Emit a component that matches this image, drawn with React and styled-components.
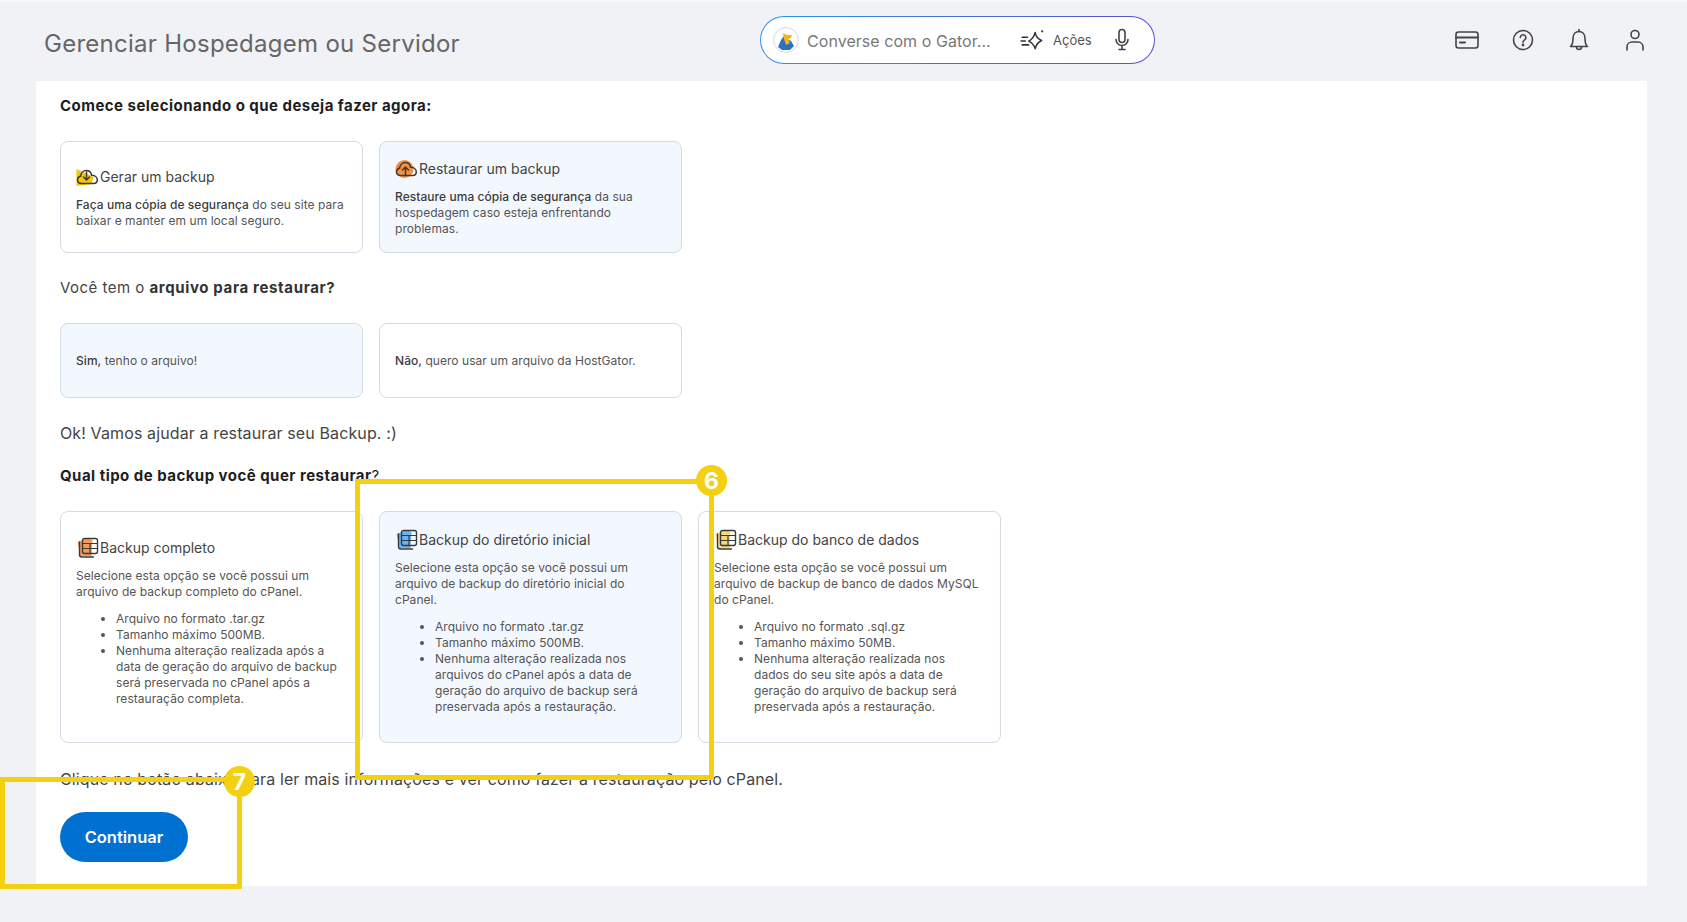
import styled, { createGlobalStyle } from "styled-components";

const GlobalStyle = createGlobalStyle`
  html, body {
    margin: 0;
    padding: 0;
    background: #f1f2f6;
  }
  * {
    box-sizing: border-box;
  }
`;

const Page = styled.div`
  position: relative;
  width: 1687px;
  height: 922px;
  overflow: hidden;
  background: #f1f2f6;
  border-top: 2px solid #f8f8f8;
  font-family: "Inter", "Liberation Sans", sans-serif;
  color: #444;
`;

const Header = styled.header`
  height: 79px;
  display: flex;
  align-items: center;
  padding: 3px 40px 0 44px;
`;

const Title = styled.h1`
  margin: 0;
  width: 716px;
  font-size: 24px;
  font-weight: 400;
  letter-spacing: 0.27px;
  color: #666;
  white-space: nowrap;
`;

const ChatBox = styled.div`
  width: 395px;
  height: 48px;
  margin-top: -7px;
  border-radius: 24px;
  padding: 1px;
  background: linear-gradient(90deg, #2c93ea, #5a4fcf);
`;

const ChatInner = styled.div`
  height: 100%;
  display: flex;
  align-items: center;
  border-radius: 23px;
  background: #fff;
  padding-left: 12px;
`;

const ChatPlaceholder = styled.span`
  margin-left: 8px;
  width: 213px;
  padding-top: 2px;
  font-size: 16px;
  letter-spacing: 0.05px;
  color: #777;
  white-space: nowrap;
`;

const Actions = styled.span`
  display: flex;
  align-items: center;
  gap: 7px;
  width: 90px;
  font-size: 13px;
  color: #555;
`;

const HeaderIcons = styled.div`
  margin-left: auto;
  display: flex;
  gap: 32px;
  margin-top: -7px;
`;

const Panel = styled.main`
  margin: 0 40px 0 36px;
  height: 805px;
  background: #fff;
  padding: 15px 24px 0;
`;

const Question = styled.p`
  margin: ${(p) => p.$margin || 0};
  height: 20px;
  line-height: 20px;
  font-size: 15px;
  letter-spacing: 0.47px;
  color: ${(p) => (p.$plain ? "#444" : "#1e1e1e")};
  font-weight: ${(p) => (p.$strong ? 700 : 400)};
  b {
    font-weight: 700;
    letter-spacing: 0.65px;
    color: #333;
  }
  span {
    font-weight: 400;
  }
`;

const CardRow = styled.div`
  display: flex;
  gap: 16px;
  margin: 25px 0;
`;

const Card = styled.div`
  width: 303px;
  height: ${(p) => p.$height}px;
  display: flex;
  flex-direction: column;
  justify-content: center;
  padding: 0 15px;
  border: 1px solid #d3dbe4;
  border-radius: 8px;
  background: ${(p) => (p.$active ? "#f3f8ff" : "#fff")};
  font-size: 12px;
  line-height: 16px;
  color: #555;
  b {
    font-weight: 500;
    color: #3c3c3c;
  }
`;

const CardTitle = styled.div`
  display: flex;
  align-items: center;
  height: 22px;
  margin-bottom: 9px;
  gap: 1px;
  font-size: 14px;
  color: #444;
`;

const CardText = styled.p`
  margin: 0;
  letter-spacing: 0.05px;
`;

const InfoList = styled.ul`
  margin: 11px 0 11px;
  padding: 0 6px 0 40px;
  letter-spacing: 0.05px;
`;

const PlainLine = styled.p`
  margin: ${(p) => p.$margin || 0};
  height: 20px;
  line-height: 20px;
  font-size: 16px;
  letter-spacing: 0.12px;
  color: #444;
`;

const ContinueButton = styled.button`
  display: block;
  width: 128px;
  height: 50px;
  margin-top: 23px;
  border: none;
  border-radius: 25px;
  background: #0071d1;
  color: #fff;
  font-family: inherit;
  font-size: 16.5px;
  font-weight: 600;
`;

const Highlight = styled.div`
  position: absolute;
  left: ${(p) => p.$x}px;
  top: ${(p) => p.$y}px;
  width: ${(p) => p.$w}px;
  height: ${(p) => p.$h}px;
  border: 5px solid #f3d110;
`;

const Badge = styled.span`
  position: absolute;
  right: -18px;
  top: ${(p) => p.$top}px;
  width: 31px;
  height: 31px;
  display: flex;
  align-items: center;
  justify-content: center;
  border-radius: 50%;
  background: #f3d110;
  color: #fff;
  font-size: 23px;
  font-weight: 700;
`;

const IconSvg = ({ size = 24, children }) => (
  <svg width={size} height={size} viewBox="0 0 24 24" fill="none" stroke="#444" strokeWidth="1.6" strokeLinecap="round" strokeLinejoin="round">
    {children}
  </svg>
);

const GatorLogo = () => (
  <svg width="26" height="26" viewBox="0 0 26 26">
    <circle cx="13" cy="13" r="12.4" fill="#fff" stroke="#d5d8e0" />
    <path d="M5 20 L8 13 L11 9 L14 12 L18 14 L21 19 L17 23 L9 23 Z" fill="#2a72c8" />
    <path d="M10 6 L14 8 L19 8 L18 11 L15 12 L17 16 L13 18 L11 12 Z" fill="#f5b21f" />
  </svg>
);

const ActionsIcon = () => (
  <svg width="26" height="26" viewBox="0 0 24 24" fill="none" stroke="#333" strokeWidth="1.4" strokeLinejoin="round" strokeLinecap="round">
    <path d="M14 5 C14.6 9 16 11 20 12.5 C16.5 14 15 16 14 20 C13 16.5 11.5 14.5 8 13 C11.5 11.5 13 9 14 5 Z" />
    <path d="M2 9.5 H7 M1 13 H5 M2 16.5 H8" />
    <circle cx="20.5" cy="4" r="1" fill="#333" stroke="none" />
  </svg>
);

const MicIcon = () => (
  <IconSvg size={24}>
    <rect x="9" y="1.5" width="6" height="13" rx="3" />
    <path d="M6 11.5 a6 6 0 0 0 12 0 M12 17.5 V21.5 M9 21.5 H15" />
  </IconSvg>
);

const BillingIcon = () => (
  <IconSvg>
    <rect x="1" y="4" width="22" height="16" rx="2.5" />
    <path d="M1 9.5 H23 M5 14.5 H10" strokeWidth="2" />
  </IconSvg>
);

const HelpIcon = () => (
  <IconSvg>
    <circle cx="12" cy="12" r="9.5" />
    <path d="M9.3 9.5 a2.8 2.8 0 1 1 4.3 2.4 c-1 .7 -1.6 1.2 -1.6 2.3" />
    <circle cx="12" cy="17" r=".6" fill="#444" />
  </IconSvg>
);

const BellIcon = () => (
  <IconSvg>
    <path d="M3.5 18.5 C6 16.5 6 14 6 10.5 C6 6 8.8 3.5 12 3.5 C15.2 3.5 18 6 18 10.5 C18 14 18 16.5 20.5 18.5 Z" />
    <path d="M9.5 19 a2.5 2.5 0 0 0 5 0 M12 3.5 V1.5" />
  </IconSvg>
);

const UserIcon = () => (
  <IconSvg>
    <circle cx="12" cy="6.5" r="4" />
    <path d="M4 22 V19 C4 16.2 6.2 14 9 14 H15 C17.8 14 20 16.2 20 19 V22" />
  </IconSvg>
);

const CloudIcon = ({ up, color }) => (
  <svg width="23" height="22" viewBox="0 0 22 22" fill="none">
    {up ? <circle cx="9" cy="11" r="9" fill={color} /> : <path d="M0 3 L17 11 L15 18 L0 20 Z" fill={color} />}
    <path d="M5 17.5 C2.5 17.5 1 15.8 1 13.8 C1 11.8 2.4 10.6 4 10.3 C4.4 7 6.8 4.5 9.8 4.5 C12.6 4.5 14.6 6.6 15.1 9.2 C18.2 9.2 20.8 11 20.8 14 C20.8 16 19.2 17.5 17 17.5 Z" stroke="#3a3a3a" strokeWidth="1.5" />
    <path d={up ? "M10 17 V9 M7 12 L10 9 L13 12" : "M10 6 V14 M7 11 L10 14 L13 11"} stroke="#3a3a3a" strokeWidth="1.5" strokeLinecap="round" strokeLinejoin="round" />
  </svg>
);

const LayersIcon = ({ color }) => (
  <svg width="23" height="22" viewBox="0 0 22 22" fill="none">
    <path d="M1 5 L11 1 L16 3 L15 19 L4 19 Z" fill={color} />
    <rect x="6" y="1.5" width="15" height="15" rx="2" stroke="#3a3a3a" strokeWidth="1.4" />
    <path d="M6 6.5 H21 M13.5 6.5 V16.5 M6 11.5 H21" stroke="#3a3a3a" strokeWidth="1.2" />
    <path d="M3 5 V17.5 C3 19 4 20 5.5 20 H17" stroke="#3a3a3a" strokeWidth="1.4" strokeLinecap="round" />
  </svg>
);

const backupCards = [
  {
    title: "Backup completo",
    color: "#f79a5a",
    text: "Selecione esta opção se você possui um arquivo de backup completo do cPanel.",
    items: [
      "Arquivo no formato .tar.gz",
      "Tamanho máximo 500MB.",
      "Nenhuma alteração realizada após a data de geração do arquivo de backup será preservada no cPanel após a restauração completa.",
    ],
  },
  {
    title: "Backup do diretório inicial",
    color: "#6db3f2",
    active: true,
    text: "Selecione esta opção se você possui um arquivo de backup do diretório inicial do cPanel.",
    items: [
      "Arquivo no formato .tar.gz",
      "Tamanho máximo 500MB.",
      "Nenhuma alteração realizada nos arquivos do cPanel após a data de geração do arquivo de backup será preservada após a restauração.",
    ],
  },
  {
    title: "Backup do banco de dados",
    color: "#f6d978",
    text: "Selecione esta opção se você possui um arquivo de backup de banco de dados MySQL do cPanel.",
    items: [
      "Arquivo no formato .sql.gz",
      "Tamanho máximo 50MB.",
      "Nenhuma alteração realizada nos dados do seu site após a data de geração do arquivo de backup será preservada após a restauração.",
    ],
  },
];

const App = () => {
  return (
    <Page>
      <GlobalStyle />
      <Header>
        <Title>Gerenciar Hospedagem ou Servidor</Title>
        <ChatBox>
          <ChatInner>
            <GatorLogo />
            <ChatPlaceholder>Converse com o Gator...</ChatPlaceholder>
            <Actions>
              <ActionsIcon />
              Ações
            </Actions>
            <MicIcon />
          </ChatInner>
        </ChatBox>
        <HeaderIcons>
          <BillingIcon />
          <HelpIcon />
          <BellIcon />
          <UserIcon />
        </HeaderIcons>
      </Header>
      <Panel>
        <Question $strong>Comece selecionando o que deseja fazer agora:</Question>
        <CardRow>
          <Card $height={112}>
            <CardTitle>
              <CloudIcon color="#f5c800" />
              Gerar um backup
            </CardTitle>
            <CardText>
              <b>Faça uma cópia de segurança</b> do seu site para baixar e manter em um local seguro.
            </CardText>
          </Card>
          <Card $height={112} $active>
            <CardTitle>
              <CloudIcon up color="#f78f3c" />
              Restaurar um backup
            </CardTitle>
            <CardText>
              <b>Restaure uma cópia de segurança</b> da sua hospedagem caso esteja enfrentando problemas.
            </CardText>
          </Card>
        </CardRow>
        <Question $plain>
          Você tem o <b>arquivo para restaurar?</b>
        </Question>
        <CardRow>
          <Card $height={75} $active>
            <CardText>
              <b>Sim,</b> tenho o arquivo!
            </CardText>
          </Card>
          <Card $height={75}>
            <CardText>
              <b>Não,</b> quero usar um arquivo da HostGator.
            </CardText>
          </Card>
        </CardRow>
        <PlainLine>Ok! Vamos ajudar a restaurar seu Backup. :)</PlainLine>
        <Question $strong $margin="23px 0 0">
          Qual tipo de backup você quer restaurar<span>?</span>
        </Question>
        <CardRow>
          {backupCards.map((card) => (
            <Card key={card.title} $height={232} $active={card.active}>
              <CardTitle>
                <LayersIcon color={card.color} />
                {card.title}
              </CardTitle>
              <CardText>{card.text}</CardText>
              <InfoList>
                {card.items.map((item) => (
                  <li key={item}>{item}</li>
                ))}
              </InfoList>
            </Card>
          ))}
        </CardRow>
        <PlainLine $margin="26px 0 0">Clique no botão abaixo para ler mais informações e ver como fazer a restauração pelo cPanel.</PlainLine>
        <ContinueButton>Continuar</ContinueButton>
      </Panel>
      <Highlight $x={355} $y={477} $w={359} $h={301}>
        <Badge $top={-19}>6</Badge>
      </Highlight>
      <Highlight $x={0} $y={775} $w={242} $h={112}>
        <Badge $top={-16}>7</Badge>
      </Highlight>
    </Page>
  );
};

export default App;
